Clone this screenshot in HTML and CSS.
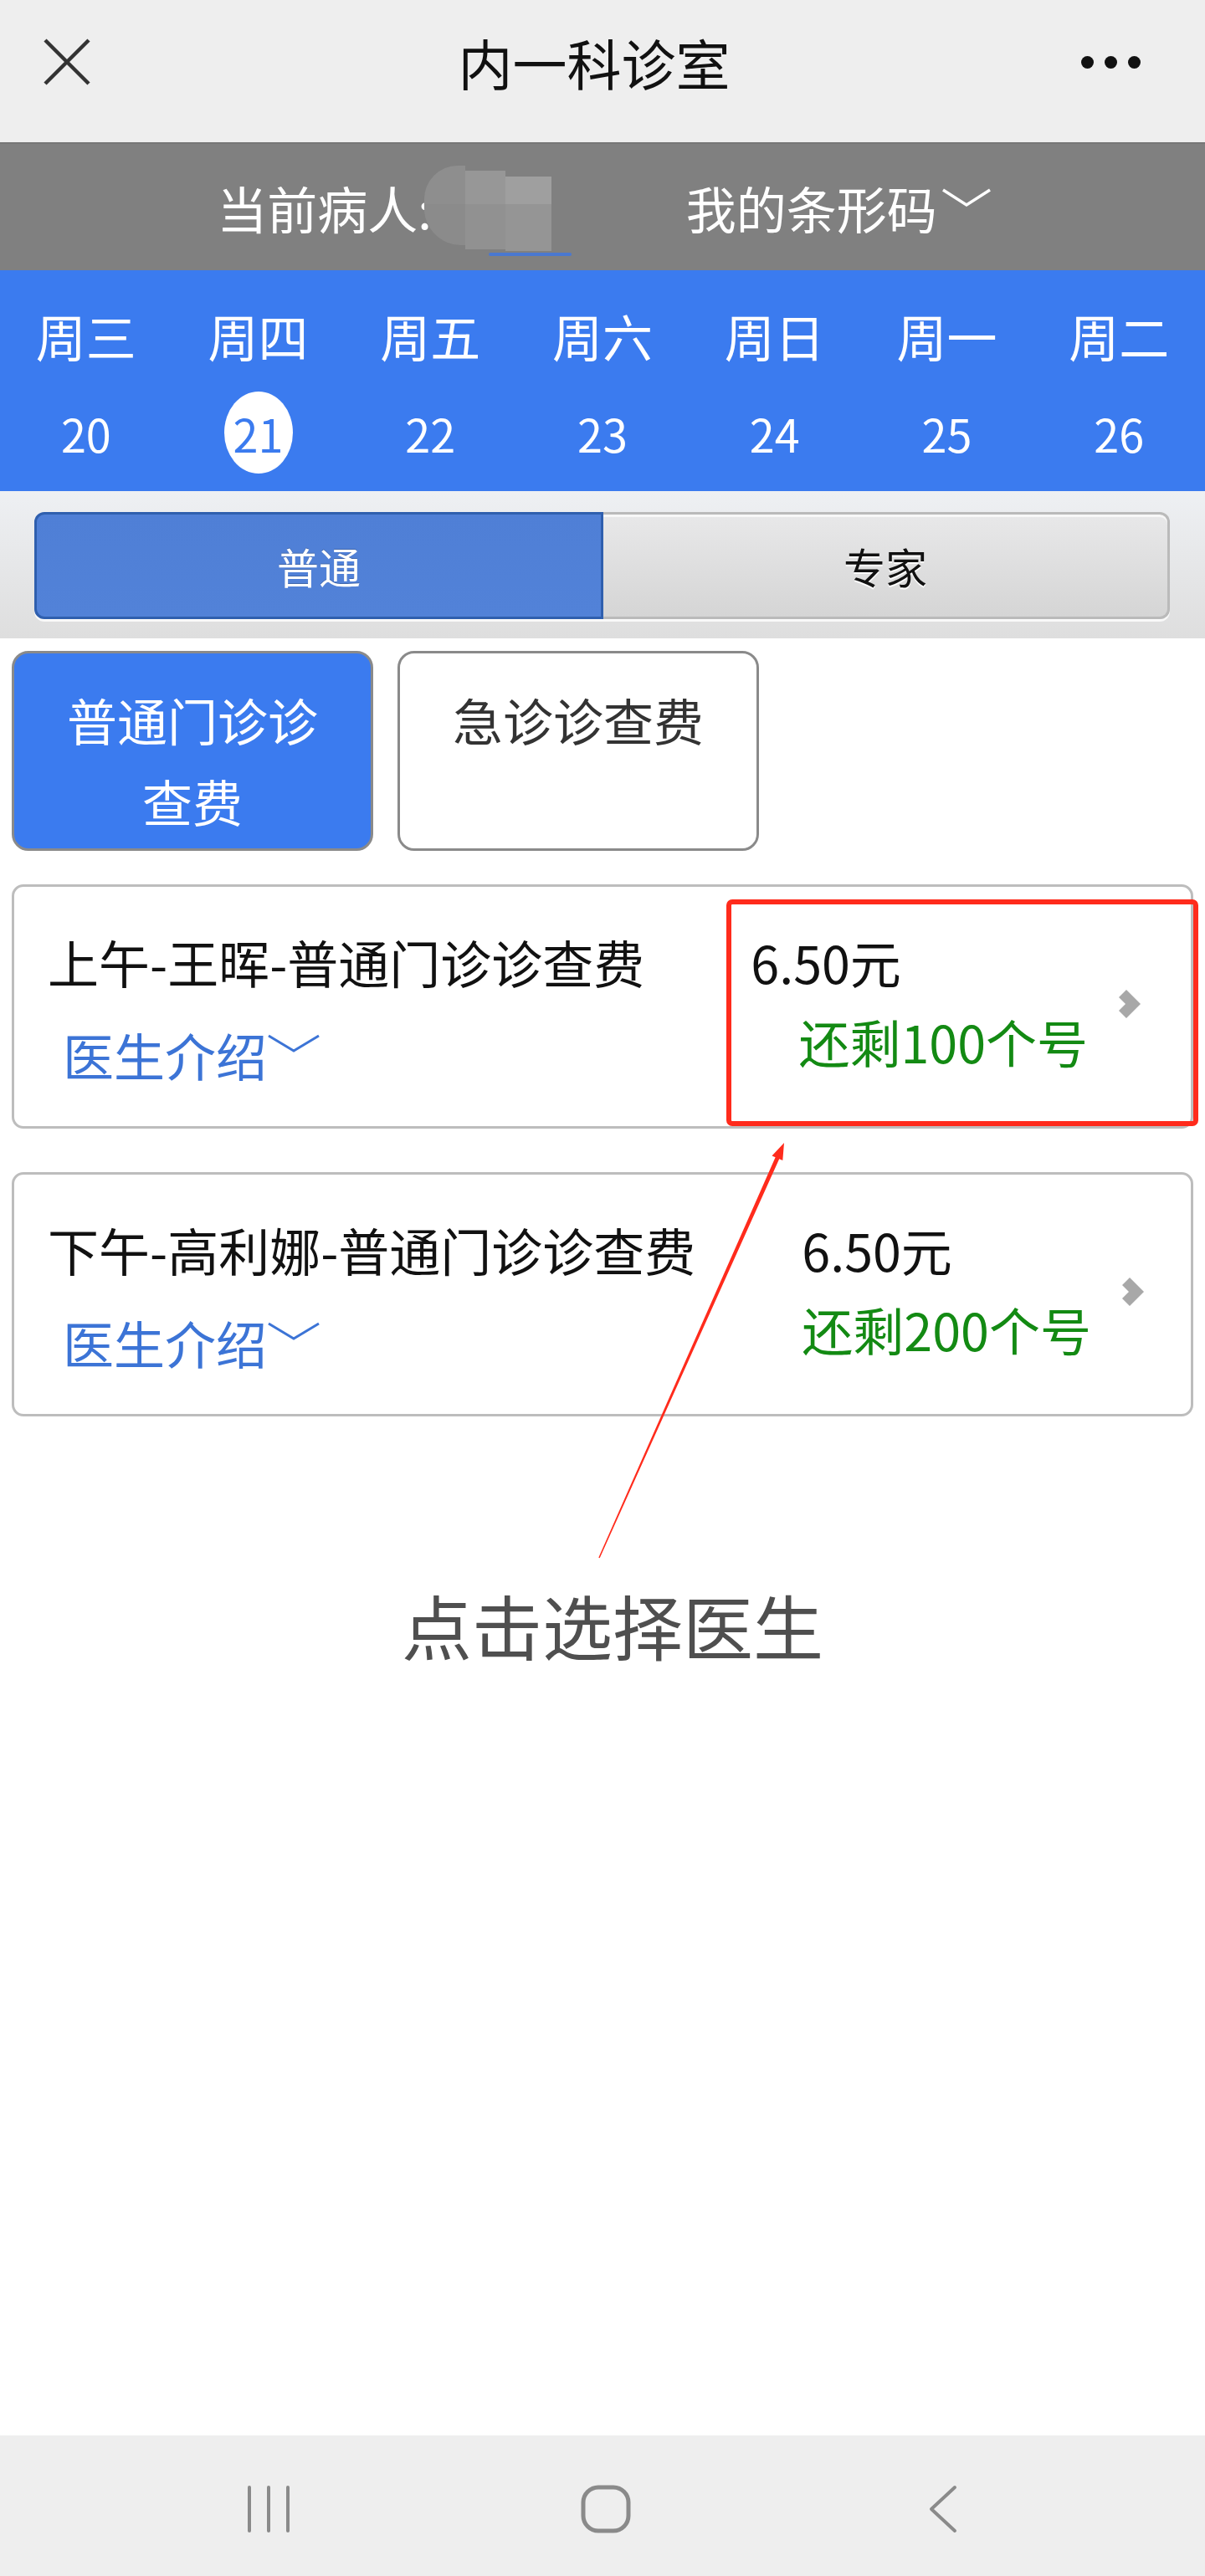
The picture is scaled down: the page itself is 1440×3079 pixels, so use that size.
FILE: index.html
```html
<!DOCTYPE html>
<html lang="zh-CN">

<head>
	<meta charset="UTF-8">
	<title>内一科诊室</title>
	<link rel="stylesheet" href="styles.css">
</head>

<body>
	<div class="page">
		<div class="topbar">
			<div class="close">
				<svg width="56" height="56" viewBox="0 0 56 56"><path d="M2 2 L54 54 M54 2 L2 54" stroke="#333" stroke-width="4.5" fill="none"/></svg>
			</div>
			<div class="title">内一科诊室</div>
			<div class="more"><span class="dot"></span><span class="dot"></span><span class="dot"></span></div>
		</div>

		<div class="patientbar">
			<span class="label">当前病人:</span>
			<span class="mask">
				<i class="m1"></i><i class="m2"></i><i class="m3"></i>
				<i class="m4"></i><i class="m5"></i><i class="m6"></i>
			</span>
			<span class="barcode">我的条形码<svg class="caret" width="60" height="24" viewBox="0 0 60 24"><path d="M2 3 L30 21 L58 3" stroke="#fff" stroke-width="3.5" fill="none"/></svg></span>
		</div>

		<div class="week">
			<div class="day"><div class="wd">周三</div><div class="dn">20</div></div>
			<div class="day"><div class="wd">周四</div><div class="dn on">21</div></div>
			<div class="day"><div class="wd">周五</div><div class="dn">22</div></div>
			<div class="day"><div class="wd">周六</div><div class="dn">23</div></div>
			<div class="day"><div class="wd">周日</div><div class="dn">24</div></div>
			<div class="day"><div class="wd">周一</div><div class="dn">25</div></div>
			<div class="day"><div class="wd">周二</div><div class="dn">26</div></div>
		</div>

		<div class="segwrap">
			<div class="seg">
				<div class="seg-item on">普通</div>
				<div class="seg-item">专家</div>
			</div>
		</div>

		<div class="types">
			<div class="type on">普通门诊诊查费</div>
			<div class="type">急诊诊查费</div>
		</div>

		<div class="slot">
			<div class="info">
				<div class="name">上午-王晖-普通门诊诊查费</div>
				<div class="intro">医生介绍<svg class="caret" width="64" height="22" viewBox="0 0 64 22"><path d="M2 2 L32 20 L62 2" stroke="#3c74d6" stroke-width="3" fill="none"/></svg></div>
			</div>
			<div class="fee">
				<div class="price">6.50元</div>
				<div class="left">还剩100个号</div>
			</div>
			<svg class="go" width="26" height="34" viewBox="0 0 26 34"><polygon points="0,9 9,0 26,17 9,34 0,25 8,17" fill="#a8a8a8"/></svg>
		</div>

		<div class="slot">
			<div class="info">
				<div class="name">下午-高利娜-普通门诊诊查费</div>
				<div class="intro">医生介绍<svg class="caret" width="64" height="22" viewBox="0 0 64 22"><path d="M2 2 L32 20 L62 2" stroke="#3c74d6" stroke-width="3" fill="none"/></svg></div>
			</div>
			<div class="fee">
				<div class="price">6.50元</div>
				<div class="left">还剩200个号</div>
			</div>
			<svg class="go" width="26" height="34" viewBox="0 0 26 34"><polygon points="0,9 9,0 26,17 9,34 0,25 8,17" fill="#a8a8a8"/></svg>
		</div>

		<div class="hint">点击选择医生</div>

		<div class="navbar">
			<div class="navbtn">
				<svg width="52" height="58" viewBox="0 0 52 58"><path d="M3 3 V55 M26 3 V55 M49 3 V55" stroke="#8a8a8a" stroke-width="4" stroke-linecap="round" fill="none"/></svg>
			</div>
			<div class="navbtn">
				<svg width="60" height="58" viewBox="0 0 60 58"><rect x="3" y="3" width="54" height="52" rx="18" stroke="#8a8a8a" stroke-width="5" fill="none"/></svg>
			</div>
			<div class="navbtn">
				<svg width="34" height="58" viewBox="0 0 34 58"><path d="M31 3 L3 29 L31 55" stroke="#8a8a8a" stroke-width="4" stroke-linecap="round" stroke-linejoin="round" fill="none"/></svg>
			</div>
		</div>

		<!-- annotation drawn over the screenshot -->
		<svg class="mark" width="1440" height="3079" viewBox="0 0 1440 3079">
			<rect x="871" y="1078" width="558" height="265" rx="4" fill="none" stroke="#ff2b1c" stroke-width="6"/>
			<polygon points="715.3,1861.7 926.6,1383.3 922.5,1381.5 937,1366 935.3,1387.1 931.2,1385.3 716.7,1862.3" fill="#ff2b1c"/>
		</svg>
	</div>
</body>

</html>
```

FILE: styles.css
```css
body {
    margin: 0;
    font-family: "Noto Sans CJK SC", "Noto Sans", sans-serif;
    background-color: #fff;
    color: #111;
}
.page {
    position: relative;
    min-height: 100vh;
    display: flex;
    flex-direction: column;
}

/* title bar */
.topbar {
    height: 170px;
    box-sizing: border-box;
    padding-bottom: 22px;
    background-color: #eeeeee;
    display: flex;
    align-items: center;
}
.close {
    width: 160px;
    padding-left: 52px;
    box-sizing: border-box;
    display: flex;
}
.title {
    flex: 1;
    text-align: center;
    font-size: 65px;
    line-height: 1;
    color: #111;
}
.more {
    width: 180px;
    padding-right: 77px;
    box-sizing: border-box;
    display: flex;
    justify-content: flex-end;
    gap: 13px;
}
.dot {
    width: 15px;
    height: 15px;
    border-radius: 50%;
    background-color: #111;
}

/* patient bar */
.patientbar {
    height: 153px;
    box-sizing: border-box;
    border-top: 2px solid #767676;
    background-color: #808080;
    color: #fff;
    font-size: 60px;
    line-height: 80px;
    display: flex;
    align-items: center;
    justify-content: center;
    padding-left: 4px;
}
.mask {
    position: relative;
    width: 152px;
    height: 100px;
    margin-left: -9px;
    display: grid;
    grid-template-columns: 49px 48px 55px;
    grid-template-rows: 46px 54px;
}
.mask i { display: block; }
.m1 { background-color: #8e8e8e; border-top-left-radius: 40px; }
.m2 { background-color: #979797; margin-top: 6px; }
.m3 { background-color: #9f9f9f; margin-top: 13px; }
.m4 { background-color: #8b8b8b; border-bottom-left-radius: 44px; margin-bottom: 5px; }
.m5 { background-color: #919191; }
.m6 { background-color: #959595; margin-bottom: -2px; }
.mask::after {
    content: "";
    position: absolute;
    left: 77px;
    bottom: -8px;
    width: 99px;
    height: 4px;
    border-radius: 2px;
    background-color: #4a78d0;
}
.barcode {
    margin-left: 161px;
    white-space: nowrap;
}
.barcode .caret {
    vertical-align: top;
    margin-top: 16px;
    margin-left: 5px;
}

/* week strip */
.week {
    background-color: #3b7bef;
    color: #fff;
    display: flex;
    padding: 38px 0 21px;
}
.day {
    flex: 1;
    text-align: center;
}
.wd {
    font-size: 60px;
    line-height: 80px;
}
.dn {
    width: 82px;
    height: 98px;
    margin: 27px auto 0;
    font-size: 54px;
    display: flex;
    align-items: center;
    justify-content: center;
}
.dn.on {
    background-color: #fff;
    border-radius: 50%;
    color: #3b7bef;
}

/* normal / expert switch */
.segwrap {
    padding: 25px 42px 23px 41px;
    background: linear-gradient(#eef0f3, #dedede);
}
.seg {
    display: flex;
    height: 128px;
    box-shadow: 0 3px 0 rgba(255,255,255,0.8);
    border-radius: 12px;
}
.seg-item {
    flex: 1;
    display: flex;
    align-items: center;
    justify-content: center;
    font-size: 50px;
    box-sizing: border-box;
}
.seg-item.on {
    background: linear-gradient(#4f7fd6, #5282d8);
    border: 3px solid #2f5fae;
    border-radius: 12px 0 0 12px;
    color: #fff;
    text-shadow: 0 -1px 0 rgba(0,0,0,0.2);
}
.seg-item:not(.on) {
    background: linear-gradient(#e8e8e9, #d5d5d5);
    border: 3px solid #bababa;
    border-left: none;
    border-radius: 0 12px 12px 0;
    box-shadow: inset 0 3px 0 #f7f7f7;
    color: #111;
    text-shadow: 0 2px 0 #fff;
}

/* fee types */
.types {
    display: flex;
    gap: 29px;
    padding: 15px 14px 0;
}
.type {
    width: 432px;
    height: 239px;
    box-sizing: border-box;
    border: 3px solid #8a8a8a;
    border-radius: 20px;
    padding: 30px 40px 0;
    font-size: 60px;
    line-height: 97px;
    text-align: center;
    background-color: #fff;
    color: #333;
}
.type.on {
    background-color: #3b7bef;
    color: #fff;
}

/* doctor rows */
.slot {
    margin: 40px 14px 0;
    height: 292px;
    box-sizing: border-box;
    border: 3px solid #bdbdbd;
    border-radius: 14px;
    padding: 50px 0 0 40px;
    display: flex;
    align-items: flex-start;
    font-size: 61px;
    line-height: 80px;
}
.slot + .slot {
    margin-top: 52px;
}
.info {
    flex: none;
}
.name {
    white-space: nowrap;
    color: #111;
}
.intro {
    margin-top: 31px;
    padding-left: 18px;
    color: #3c74d6;
    white-space: nowrap;
}
.intro .caret {
    vertical-align: top;
    margin-top: 15px;
}
.fee {
    flex: 1;
    margin-left: 127px;
}
.price {
    color: #111;
    white-space: nowrap;
}
.left {
    margin-top: 15px;
    text-align: right;
    color: #138a13;
    white-space: nowrap;
}
.go {
    flex: none;
    margin: 73px 60px 0 37px;
}

.hint {
    margin-top: 207px;
    padding-left: 24px;
    text-align: center;
    font-size: 84px;
    line-height: 84px;
    color: #4f4f4f;
}

/* system navigation */
.navbar {
    margin-top: auto;
    height: 168px;
    box-sizing: border-box;
    padding: 8px 0 0 8px;
    background-color: #eeeeee;
    display: flex;
    justify-content: center;
    align-items: center;
    gap: 283px;
}
.navbtn {
    width: 120px;
    display: flex;
    justify-content: center;
}

.mark {
    position: absolute;
    left: 0;
    top: 0;
    pointer-events: none;
}
```
